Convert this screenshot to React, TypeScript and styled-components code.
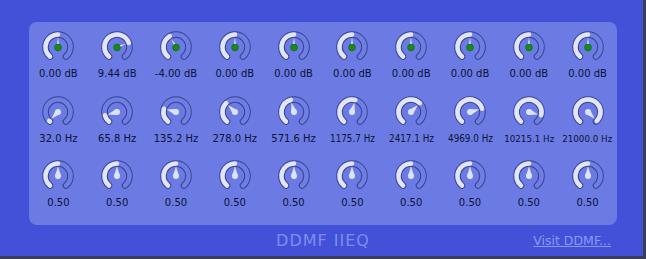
import React from 'react'
import styled, { createGlobalStyle } from 'styled-components'

const GlobalStyle = createGlobalStyle`
  html, body {
    margin: 0;
    padding: 0;
    background: #4251d8;
  }
`

const Frame = styled.div`
  box-sizing: border-box;
  width: 646px;
  height: 259px;
  background: #4251d8;
  border-right: 3px solid #3a3e58;
  border-bottom: 3px solid #3a3e58;
  padding: 22px 26px 0 29px;
  display: flex;
  flex-direction: column;
  font-family: "DejaVu Sans", Verdana, sans-serif;
`

const Panel = styled.div`
  width: 588px;
  height: 203px;
  box-sizing: border-box;
  background: #6b7be3;
  border-radius: 8px;
  padding: 8px 0 15px;
  display: grid;
  grid-template-columns: repeat(10, 1fr);
  row-gap: 13.5px;
`

const Cell = styled.div`
  display: flex;
  flex-direction: column;
  align-items: center;
  height: 51px;
`

const Label = styled.div<{ $size: number; $squeeze: number }>`
  margin-top: 3px;
  height: 14px;
  line-height: 14px;
  font-size: ${p => p.$size}px;
  color: #0c1236;
  white-space: nowrap;
  transform: scaleX(${p => p.$squeeze});
`

const Footer = styled.div`
  flex: 1;
  width: 588px;
  display: grid;
  grid-template-columns: 1fr auto 1fr;
  align-items: center;
  padding-bottom: 1px;
`

const Title = styled.div`
  grid-column: 2;
  font-size: 16px;
  letter-spacing: 1px;
  color: #7d8ef0;
`

const VisitLink = styled.a`
  grid-column: 3;
  justify-self: end;
  margin-right: 6px;
  font-size: 12.5px;
  color: #8a9af6;
  text-decoration: underline;
`

type KnobKind = 'gain' | 'freq' | 'q'

const C = 17
const polar = (r: number, deg: number): [number, number] => {
  const a = ((deg - 90) * Math.PI) / 180
  return [C + r * Math.cos(a), C + r * Math.sin(a)]
}
const arc = (r: number, from: number, to: number) => {
  const [x1, y1] = polar(r, from)
  const [x2, y2] = polar(r, to)
  const large = to - from > 180 ? 1 : 0
  return `M${x1} ${y1} A${r} ${r} 0 ${large} 1 ${x2} ${y2}`
}

const Knob = ({ angle, kind }: { angle: number; kind: KnobKind }) => {
  const mid = 12.5
  const tip = polar(9.5, angle)
  const b1 = polar(3, angle - 90)
  const b2 = polar(3, angle + 90)
  return (
    <svg width="34" height="34" viewBox="0 0 34 34" style={{ display: 'block' }}>
      <path d={arc(mid, -140, 140)} fill="none" stroke="#3a4490" strokeWidth="6.6" strokeLinecap="round" />
      <path d={arc(mid, -140, 140)} fill="none" stroke="#6e7ee4" strokeWidth="4.6" strokeLinecap="round" />
      {angle > -136 && (
        <path d={arc(mid, -140, angle)} fill="none" stroke="#e1e5f5" strokeWidth="4.6" strokeLinecap="round" />
      )}
      {kind === 'gain' ? (
        <>
          <polygon points={`${tip[0]},${tip[1]} ${polar(1.2, angle - 90).join(',')} ${polar(1.2, angle + 90).join(',')}`} fill="#f3f4ff" />
          <circle cx={C} cy={C + 0.5} r="3.4" fill="#168c16" stroke="#0e5f14" strokeWidth="0.6" />
        </>
      ) : (
        <>
          <polygon points={`${tip[0]},${tip[1]} ${b1.join(',')} ${b2.join(',')}`} fill="#dce3fc" />
          <circle cx={C} cy={C} r="3" fill="#dce3fc" />
        </>
      )}
    </svg>
  )
}

const gains = [0, 9.44, -4, 0, 0, 0, 0, 0, 0, 0]
const freqs = [32.0, 65.8, 135.2, 278.0, 571.6, 1175.7, 2417.1, 4969.0, 10215.1, 21000.0]
const qs = [0.5, 0.5, 0.5, 0.5, 0.5, 0.5, 0.5, 0.5, 0.5, 0.5]

const fitFor = (text: string) => {
  if (text.length >= 10) return { size: 9.5, squeeze: 0.92 }
  if (text.length === 9) return { size: 10, squeeze: 0.88 }
  return { size: 10, squeeze: 1 }
}

const KnobCell = ({ angle, kind, text }: { angle: number; kind: KnobKind; text: string }) => {
  const fit = fitFor(text)
  return (
    <Cell>
      <Knob angle={angle} kind={kind} />
      <Label $size={fit.size} $squeeze={fit.squeeze}>{text}</Label>
    </Cell>
  )
}

export default function App() {
  return (
    <>
      <GlobalStyle />
      <Frame>
        <Panel>
          {gains.map((g, i) => (
            <KnobCell key={'g' + i} kind="gain" angle={(g / 18) * 135} text={`${g.toFixed(2)} dB`} />
          ))}
          {freqs.map((f, i) => (
            <KnobCell key={'f' + i} kind="freq" angle={-135 + i * 30} text={`${f.toFixed(1)} Hz`} />
          ))}
          {qs.map((q, i) => (
            <KnobCell key={'q' + i} kind="q" angle={0} text={q.toFixed(2)} />
          ))}
        </Panel>
        <Footer>
          <Title>DDMF IIEQ</Title>
          <VisitLink href="#">Visit DDMF...</VisitLink>
        </Footer>
      </Frame>
    </>
  )
}
